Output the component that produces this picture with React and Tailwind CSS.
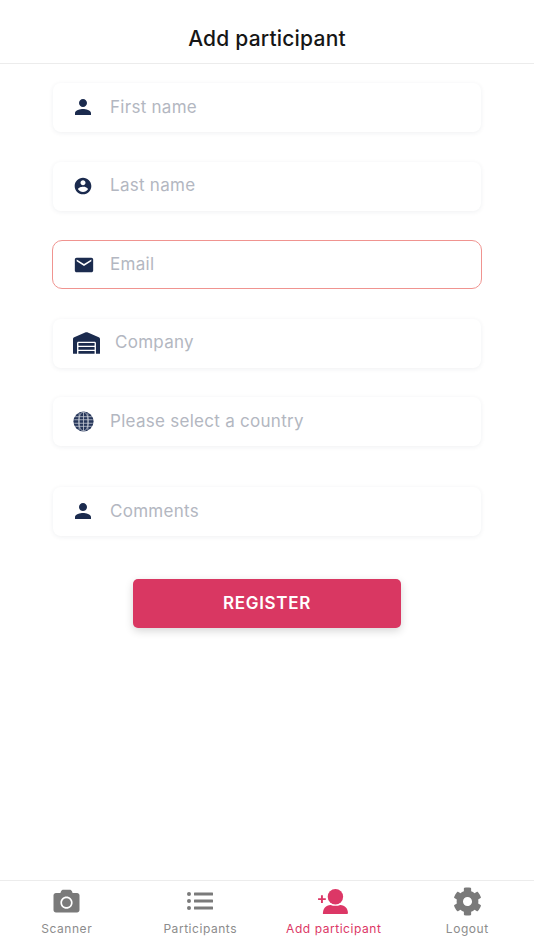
import React from "react";
import { FaCamera, FaCog, FaWarehouse } from "react-icons/fa";

const Person = ({ className }) => (
  <svg viewBox="0 0 24 24" className={className} fill="currentColor">
    <path d="M12 12c2.21 0 4-1.79 4-4s-1.790-4-4-4-4 1.790-4 4 1.790 4 4 4zm0 2c-2.670 0-8 1.340-8 4v2h16v-2c0-2.660-5.330-4-8-4z" />
  </svg>
);
const AccountCircle = ({ className }) => (
  <svg viewBox="0 0 24 24" className={className} fill="currentColor">
    <path d="M12 2C6.48 2 2 6.48 2 12s4.48 10 10 10 10-4.48 10-10S17.52 2 12 2zm0 3c1.66 0 3 1.34 3 3s-1.34 3-3 3-3-1.34-3-3 1.34-3 3-3zm0 14.2c-2.5 0-4.71-1.28-6-3.22.03-1.99 4-3.08 6-3.08 1.99 0 5.97 1.09 6 3.08-1.29 1.94-3.5 3.22-6 3.22z" />
  </svg>
);
const Mail = ({ className }) => (
  <svg viewBox="0 0 24 24" className={className} fill="currentColor">
    <path d="M20 4H4c-1.1 0-1.99.9-1.99 2L2 18c0 1.1.9 2 2 2h16c1.1 0 2-.9 2-2V6c0-1.1-.9-2-2-2zm0 4l-8 5-8-5V6l8 5 8-5v2z" />
  </svg>
);
const Globe = ({ className }) => (
  <svg viewBox="0 0 24 24" className={className} fill="none">
    <circle cx="12" cy="12" r="11.500" fill="#26365a" />
    <g stroke="#c4c9d4" strokeWidth="0.9">
      <ellipse cx="12" cy="12" rx="5.500" ry="11" />
      <path d="M12 1v22M2.500 6.500h19M1.500 10h21M1.500 14h21M2.500 17.500h19" />
      <path d="M7 2.500v19M17 2.500v19" />
    </g>
  </svg>
);
const AddPerson = ({ className }) => (
  <svg viewBox="0 0 32 28" className={className} fill="currentColor">
    <circle cx="18" cy="9" r="8" />
    <path d="M5 27c0-6 3-9 8-9.500c3 1.200 7 1.200 10 0c5 .5 8 3.500 8 8.500c0 .6-.4 1-1 1z" />
    <path d="M0 10.500h8v2H0zM3 7.500h2v8H3z" />
  </svg>
);
const ListIcon = ({ className }) => (
  <svg viewBox="0 0 26 20" className={className} fill="currentColor">
    <circle cx="2" cy="3" r="2" />
    <circle cx="2" cy="10" r="2" />
    <circle cx="2" cy="17" r="2" />
    <rect x="7" y="1.500" width="19" height="3" rx="0.500" />
    <rect x="7" y="8.500" width="19" height="3" rx="0.500" />
    <rect x="7" y="15.500" width="19" height="3" rx="0.500" />
  </svg>
);

const Field = ({ icon, label, textGap, pl, error, className = "" }) => (
  <div
    className={`flex h-[49px] items-center bg-white ${pl} ${textGap} ${
      error
        ? "mx-[-1px] rounded-[10px] border-[1.500px] border-[#f09490]"
        : "rounded-lg shadow-[0_1px_5px_rgba(30,40,70,0.07)]"
    } ${className}`}
  >
    <span className="flex shrink-0 items-center justify-center text-[#1b2b4e]">{icon}</span>
    <span className="text-[17px] tracking-[0.28px] text-[#b3b7c1]">{label}</span>
  </div>
);

const Tab = ({ icon, label, active }) => (
  <div className="flex flex-1 flex-col items-center">
    <div className={`flex h-[30px] items-center justify-center ${active ? "text-[#dc3766]" : "text-[#7a7a7a]"}`}>{icon}</div>
    <span className={`mt-[4px] text-[12px] tracking-[0.55px] ${active ? "text-[#dc3766]" : "text-[#8c8c8c]"}`}>{label}</span>
  </div>
);

export default function App() {
  return (
    <div className="flex h-[950px] w-[534px] flex-col bg-white font-['Inter',sans-serif]">
      <header className="flex h-[64px] shrink-0 items-end justify-center border-b border-[#ececec] pb-[9px]">
        <h1 className="text-[21px] font-medium tracking-[0.2px] text-[#161616]">Add participant</h1>
      </header>

      <main className="flex flex-1 flex-col px-[53px] pt-[19px]">
        <Field icon={<Person className="mb-[2px] h-[24px] w-[24px]" />} label="First name" pl="pl-[18px]" textGap="gap-[15px]" />
        <Field icon={<AccountCircle className="h-[20px] w-[20px]" />} label="Last name" pl="pl-[20px]" textGap="gap-[17px]" className="mt-[29.500px]" />
        <Field icon={<Mail className="h-[22px] w-[22px]" />} label="Email" error pl="pl-[20px]" textGap="gap-[15px]" className="mt-[29.500px]" />
        <Field icon={<FaWarehouse className="h-[22px] w-[27px]" />} label="Company" pl="pl-[20px]" textGap="gap-[15px]" className="mt-[29.500px]" />
        <Field icon={<Globe className="h-[21px] w-[21px]" />} label="Please select a country" pl="pl-[20px]" textGap="gap-[16px]" className="mt-[29.500px]" />
        <Field icon={<Person className="mb-[2px] h-[24px] w-[24px]" />} label="Comments" pl="pl-[18px]" textGap="gap-[15px]" className="mt-[41px]" />

        <button className="mx-auto mt-[43px] flex h-[49px] w-[268px] items-center justify-center rounded-[5px] bg-[#d93762] text-[17px] font-semibold tracking-[0.7px] text-white shadow-[0_3px_8px_rgba(0,0,0,0.16)]">
          REGISTER
        </button>
      </main>

      <nav className="flex h-[70px] shrink-0 border-t border-[#ececec] pt-[5px]">
        <Tab icon={<FaCamera className="h-[26px] w-[29px]" />} label="Scanner" />
        <Tab icon={<ListIcon className="h-[20px] w-[26px]" />} label="Participants" />
        <Tab active icon={<AddPerson className="h-[27px] w-[31px]" />} label="Add participant" />
        <Tab icon={<FaCog className="h-[29px] w-[29px]" />} label="Logout" />
      </nav>
    </div>
  );
}
